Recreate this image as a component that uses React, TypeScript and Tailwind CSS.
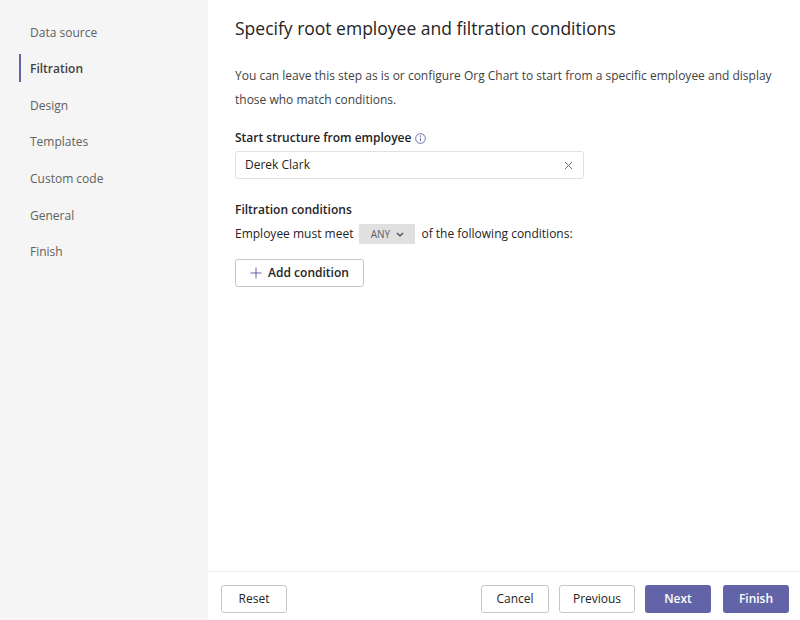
import React from "react";

const font = { fontFamily: '"Open Sans", "Noto Sans", Arial, sans-serif' };

const items = ["Data source", "Filtration", "Design", "Templates", "Custom code", "General", "Finish"];

export default function App() {
  return (
    <div className="flex h-[620px] w-[800px] overflow-hidden bg-white text-[#242424]" style={font}>
      <aside className="flex w-[208px] shrink-0 flex-col gap-[8.67px] bg-[#f5f5f5] pt-[17px]">
        {items.map((it) => {
          const active = it === "Filtration";
          return (
            <div key={it} className="flex h-[28px] items-center pl-[19px]">
              <div className={`h-[28px] w-[2px] ${active ? "bg-[#6264a7]" : "bg-transparent"}`} />
              <span
                className={`pl-[9px] pt-[3px] text-[12px] ${active ? "font-semibold text-[#424242]" : "text-[#616161]"}`}
              >
                {it}
              </span>
            </div>
          );
        })}
      </aside>
      <main className="flex flex-1 flex-col">
        <div className="flex-1 pl-[27px] pr-[20px] pt-[16px]">
          <h1 className="text-[17.5px] font-medium leading-[24px] text-[#242424]">
            Specify root employee and filtration conditions
          </h1>
          <p className="mt-[24px] text-[12px] leading-[24px] text-[#424242]">
            You can leave this step as is or configure Org Chart to start from a specific employee and display those
            who match conditions.
          </p>
          <div className="mt-[18px] flex items-center gap-[4px] text-[12px] font-semibold leading-[16px] text-[#242424]">
            <span>Start structure from employee</span>
            <svg width="11" height="11" viewBox="0 0 12 12" fill="none" stroke="#6264a7" strokeWidth="1">
              <circle cx="6" cy="6" r="5.3" />
              <line x1="6" y1="5.2" x2="6" y2="8.8" />
              <circle cx="6" cy="3.4" r="0.4" fill="#6264a7" />
            </svg>
          </div>
          <div className="mt-[5px] flex h-[28px] w-[349px] items-center justify-between rounded-[3px] border border-[#e0e0e0] pl-[9px] pr-[10px]">
            <span className="text-[12px] text-[#242424]">Derek Clark</span>
            <svg width="9" height="9" viewBox="0 0 10 10" stroke="#616161" strokeWidth="1">
              <line x1="1" y1="1" x2="9" y2="9" />
              <line x1="9" y1="1" x2="1" y2="9" />
            </svg>
          </div>
          <div className="mt-[23px] text-[12px] font-semibold leading-[16px] text-[#242424]">Filtration conditions</div>
          <div className="mt-[6px] flex items-center text-[12px] text-[#242424]">
            <span>Employee must meet</span>
            <div className="mx-[6px] flex h-[20px] w-[56px] items-center justify-center gap-[6px] bg-[#e0e0e0] text-[10px] text-[#616161]">
              <span>ANY</span>
              <svg width="8" height="5" viewBox="0 0 8 5" fill="none" stroke="#424242" strokeWidth="1.2">
                <polyline points="1,1 4,4 7,1" />
              </svg>
            </div>
            <span>of the following conditions:</span>
          </div>
          <button className="mt-[15px] flex h-[28px] w-[129px] items-center justify-center gap-[6px] rounded-[3px] border border-[#c7c7c7] bg-white text-[12px] font-semibold text-[#242424]">
            <svg width="12" height="12" viewBox="0 0 12 12" stroke="#6264a7" strokeWidth="1">
              <line x1="6" y1="0.5" x2="6" y2="11.5" />
              <line x1="0.5" y1="6" x2="11.5" y2="6" />
            </svg>
            <span>Add condition</span>
          </button>
        </div>
        <footer className="flex h-[49px] items-start border-t border-[#ebebeb] pl-[13px] pr-[11px] pt-[13px]">
          <button className="h-[28px] w-[66px] rounded-[3px] border border-[#c7c7c7] bg-white text-[12px] text-[#242424]">
            Reset
          </button>
          <div className="ml-auto flex gap-[10px]">
            <button className="h-[28px] w-[68px] rounded-[3px] border border-[#c7c7c7] bg-white text-[12px] text-[#242424]">
              Cancel
            </button>
            <button className="h-[28px] w-[76px] rounded-[3px] border border-[#c7c7c7] bg-white text-[12px] text-[#242424]">
              Previous
            </button>
            <button className="h-[28px] w-[66px] rounded-[3px] bg-[#6264a7] text-[12px] font-semibold text-white">
              Next
            </button>
            <button className="ml-[2px] h-[28px] w-[66px] rounded-[3px] bg-[#6264a7] text-[12px] font-semibold text-white">
              Finish
            </button>
          </div>
        </footer>
      </main>
    </div>
  );
}
